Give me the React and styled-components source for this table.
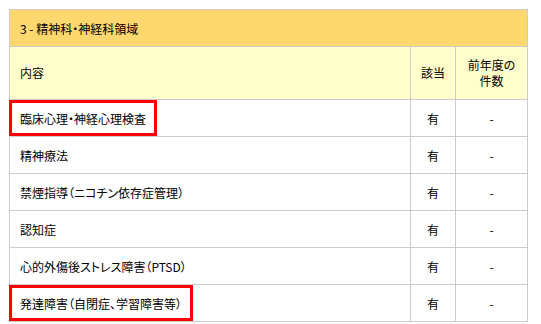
import styled, { createGlobalStyle } from "styled-components";

const GlobalStyle = createGlobalStyle`
  html, body {
    margin: 0;
    padding: 0;
    background: #ffffff;
  }
  body {
    font-family: "Noto Sans CJK JP", "Noto Sans", sans-serif;
    font-size: 12px;
    color: #000000;
    font-feature-settings: "palt";
  }
`;

const Wrap = styled.div`
  padding: 9px 0 0 9px;
`;

const Table = styled.table`
  width: 518px;
  border-collapse: collapse;
  table-layout: fixed;
  border: 1px solid #cccccc;
`;

const TitleCell = styled.th`
  height: 36px;
  padding: 0 0 0 10px;
  background: #fed86e;
  border: 1px solid #cccccc;
  text-align: left;
  font-weight: normal;
`;

const HeadCell = styled.th`
  height: 52px;
  padding: ${(p) => (p.$left ? "0 0 0 10px" : "0")};
  background: #ffffcc;
  border: 1px solid #cccccc;
  text-align: ${(p) => (p.$left ? "left" : "center")};
  font-weight: normal;
  line-height: 16px;
`;

const Cell = styled.td`
  height: 36px;
  padding: ${(p) => (p.$marked ? "0" : p.$left ? "0 0 0 10px" : "0")};
  border: 1px solid #cccccc;
  text-align: ${(p) => (p.$left ? "left" : "center")};
  vertical-align: middle;
`;

const Marked = styled.div`
  display: inline-flex;
  align-items: center;
  height: 36px;
  box-sizing: border-box;
  margin-left: -1px;
  padding: 0 8px;
  border: 3px solid #ff0000;
`;

const rows = [
  { name: "臨床心理・神経心理検査", marked: true },
  { name: "精神療法" },
  { name: "禁煙指導（ニコチン依存症管理）" },
  { name: "認知症" },
  { name: "心的外傷後ストレス障害（PTSD）" },
  { name: "発達障害（自閉症、学習障害等）", marked: true },
];

const App = () => {
  return (
    <Wrap>
      <GlobalStyle />
      <Table>
        <colgroup>
          <col style={{ width: 401 }} />
          <col style={{ width: 45 }} />
          <col style={{ width: 72 }} />
        </colgroup>
        <thead>
          <tr>
            <TitleCell colSpan={3}>3 - 精神科・神経科領域</TitleCell>
          </tr>
          <tr>
            <HeadCell $left>内容</HeadCell>
            <HeadCell>該当</HeadCell>
            <HeadCell>
              前年度の
              <br />
              件数
            </HeadCell>
          </tr>
        </thead>
        <tbody>
          {rows.map((row, idx) => (
            <tr key={idx}>
              <Cell $left $marked={row.marked}>
                {row.marked ? <Marked>{row.name}</Marked> : row.name}
              </Cell>
              <Cell>有</Cell>
              <Cell>-</Cell>
            </tr>
          ))}
        </tbody>
      </Table>
    </Wrap>
  );
};

export default App;
